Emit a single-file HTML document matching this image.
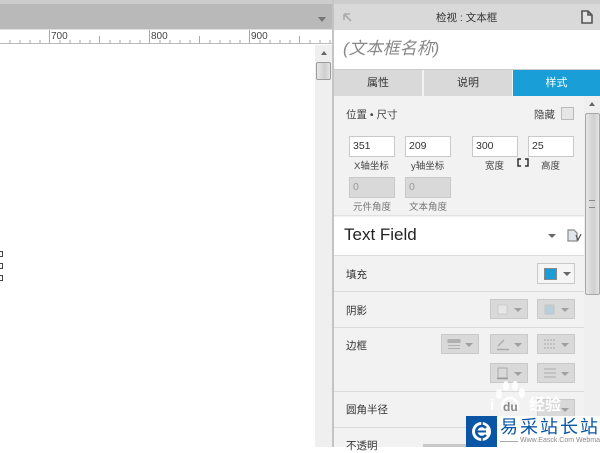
<!DOCTYPE html>
<html><head><meta charset="utf-8">
<style>
html,body{margin:0;padding:0}
body{width:600px;height:447px;overflow:hidden;position:relative;background:#fff;font-family:"Liberation Sans","Noto Sans CJK SC",sans-serif;color:#333}
.a{position:absolute;display:block}
.t{position:absolute;white-space:nowrap;line-height:14px;font-size:10.5px;color:#444}
.in{position:absolute;width:44px;height:19px;border:1px solid #c9c9c9;background:#fff;font-size:10.5px;line-height:19px;text-indent:3px;color:#333}
.in.d{background:#d9d9d9;color:#999}
.dd{position:absolute;width:36px;height:18px;border:1px solid #c9c9c9;background:#d9d9d9}
.dd:after{content:"";position:absolute;right:5px;top:8px;border:4px solid transparent;border-top:4px solid #a0a0a0;border-bottom:0}
.dd svg{position:absolute;left:4px;top:2px}
.line{position:absolute;left:334px;width:250px;height:1px;background:#dcdcdc}
.r{position:absolute;font-size:10px;color:#444;top:31px;line-height:11px}
</style></head><body>
<div class="a" style="left:0;top:0;width:600px;height:4px;background:#cdcdcd"></div>
<div class="a" style="left:0;top:4px;width:332px;height:25px;background:#b9b9b9"></div>
<div class="a" style="left:318px;top:17px;border:4px solid transparent;border-top:5px solid #777;border-bottom:0"></div>
<div class="a" style="left:0;top:29px;width:332px;height:1px;background:#dedede"></div>
<svg class="a" style="left:0;top:30px" width="332" height="15">
<path d="M0 13.5H332" stroke="#bbb" fill="none"/>
<path d="M10 10v3M20 10v3M30 10v3M40 10v3M60 10v3M70 10v3M80 10v3M90 10v3M110 10v3M120 10v3M130 10v3M140 10v3M160 10v3M170 10v3M180 10v3M190 10v3M210 10v3M220 10v3M230 10v3M240 10v3M260 10v3M270 10v3M280 10v3M290 10v3M310 10v3M320 10v3M330 10v3" stroke="#aaa" fill="none"/>
<path d="M49.5 0v13M149.5 0v13M249.5 0v13M99.5 6v7M199.5 6v7M299.5 6v7" stroke="#aaa" fill="none"/>
</svg>
<div class="r" style="left:51px">700</div>
<div class="r" style="left:151px">800</div>
<div class="r" style="left:251px">900</div>

<div class="a" style="left:315px;top:45px;width:17px;height:402px;background:#efefef"></div>
<div class="a" style="left:321px;top:51px;border:3px solid transparent;border-bottom:4px solid #666;border-top:0"></div>
<div class="a" style="left:316px;top:62px;width:13px;height:16px;border:1px solid #9c9c9c;border-radius:2px;background:linear-gradient(90deg,#e6e6e6,#cfcfcf 60%,#e4e4e4)"></div>

<div class="a" style="left:332px;top:0;width:2px;height:447px;background:#c4c4c4"></div>

<!-- panel -->
<div class="a" style="left:334px;top:4px;width:266px;height:26px;background:#d9d9d9"></div>
<svg class="a" style="left:343px;top:13px" width="10" height="10"><path d="M1 1h6M1 1v6M1 1l7 7" stroke="#aaa" stroke-width="1.6" fill="none"/></svg>
<div class="t" style="left:436px;top:11px;color:#333">检视 : 文本框</div>
<svg class="a" style="left:581px;top:10px" width="12" height="14"><path d="M1 1h6l4 4v8H1zM7 1v4h4" stroke="#555" stroke-width="1.6" fill="#e4e4e4"/></svg>
<div class="a" style="left:334px;top:30px;width:266px;height:39px;background:#fff"></div>
<div class="t" style="left:343px;top:37px;font-size:17px;line-height:23px;font-style:italic;color:#888">(文本框名称)</div>
<div class="a" style="left:334px;top:69px;width:266px;height:1px;background:#ccc"></div>
<div class="a" style="left:334px;top:70px;width:266px;height:26px;background:#f2f2f2"></div>
<div class="a" style="left:334px;top:70px;width:88px;height:26px;background:#d9d9d9;text-align:center;font-size:11px;line-height:26px;color:#333">属性</div>
<div class="a" style="left:424px;top:70px;width:88px;height:26px;background:#d9d9d9;text-align:center;font-size:11px;line-height:26px;color:#333">说明</div>
<div class="a" style="left:513px;top:70px;width:87px;height:26px;background:#199ed8;text-align:center;font-size:11px;line-height:26px;color:#fff">样式</div>
<div class="a" style="left:334px;top:96px;width:250px;height:351px;background:#f2f2f2"></div>

<!-- panel scrollbar -->
<div class="a" style="left:584px;top:96px;width:16px;height:351px;background:#efefef"></div>
<div class="a" style="left:589px;top:102px;border:3px solid transparent;border-bottom:4px solid #666;border-top:0"></div>
<div class="a" style="left:585px;top:113px;width:13px;height:180px;border:1px solid #a8a8a8;border-radius:2px;background:linear-gradient(90deg,#e6e6e6,#d0d0d0 60%,#e4e4e4)"></div>
<div class="a" style="left:589px;top:200px;width:6px;height:6px;border-top:1px solid #888;border-bottom:1px solid #888"></div>

<div class="t" style="left:346px;top:108px;font-size:10.5px">位置 • 尺寸</div>
<div class="t" style="left:534px;top:108px">隐藏</div>
<div class="a" style="left:561px;top:107px;width:11px;height:11px;border:1px solid #bbb;background:#e6e6e6"></div>

<div class="in" style="left:349px;top:136px">351</div>
<div class="in" style="left:405px;top:136px">209</div>
<div class="in" style="left:472px;top:136px">300</div>
<div class="in" style="left:528px;top:136px">25</div>
<div class="t" style="left:354px;top:160px;font-size:9.5px">X轴坐标</div>
<div class="t" style="left:411px;top:160px;font-size:9.5px">y轴坐标</div>
<div class="t" style="left:485px;top:160px;font-size:9.5px">宽度</div>
<div class="t" style="left:541px;top:160px;font-size:9.5px">高度</div>
<svg class="a" style="left:517px;top:158px" width="12" height="10"><path d="M4 1H1v7h3M8 1h3v7H8" stroke="#333" stroke-width="1.5" fill="none"/></svg>
<div class="in d" style="left:349px;top:177px">0</div>
<div class="in d" style="left:405px;top:177px">0</div>
<div class="t" style="left:353px;top:201px;font-size:9.5px;color:#777">元件角度</div>
<div class="t" style="left:409px;top:201px;font-size:9.5px;color:#777">文本角度</div>

<div class="a" style="left:334px;top:217px;width:250px;height:38px;background:#fff"></div>
<div class="a" style="left:334px;top:215px;width:250px;height:1px;background:#e2e2e2"></div>
<div class="line" style="top:255px"></div>
<div class="t" style="left:344px;top:224px;font-size:17px;line-height:22px;color:#222">Text Field</div>
<div class="a" style="left:548px;top:234px;border:4px solid transparent;border-top:4px solid #666;border-bottom:0"></div>
<svg class="a" style="left:567px;top:229px" width="15" height="13"><path d="M1 1h6l3 3v8H1z" stroke="#8a8a8a" stroke-width="1.2" fill="#dfe7ea"/><path d="M9 6l2 5 3-6" stroke="#555" stroke-width="1.2" fill="none"/></svg>

<div class="t" style="left:346px;top:268px;color:#333">填充</div>
<div class="a" style="left:537px;top:263px;width:36px;height:19px;border:1px solid #c9c9c9;background:#f5f5f5"></div>
<div class="a" style="left:544px;top:268px;width:11px;height:10px;background:#199ed8;border:1px solid #888"></div>
<div class="a" style="left:563px;top:272px;border:4px solid transparent;border-top:4px solid #666;border-bottom:0"></div>
<div class="line" style="top:291px"></div>

<div class="t" style="left:346px;top:304px;color:#333">阴影</div>
<div class="dd" style="left:490px;top:299px"><svg width="14" height="14"><rect x="3" y="3" width="9" height="9" fill="#e6e6e6" stroke="#ccc"/></svg></div>
<div class="dd" style="left:537px;top:299px"><svg width="14" height="14"><rect x="3" y="3" width="9" height="9" fill="#b9cfdc" stroke="#c4c4c4"/></svg></div>
<div class="line" style="top:327px"></div>

<div class="t" style="left:346px;top:339px;color:#333">边框</div>
<div class="dd" style="left:441px;top:334px"><svg width="16" height="14"><path d="M2 2.5h12v3H2zM2 8.5h12M2 11.5h12" stroke="#b0b0b0" fill="#b0b0b0"/></svg></div>
<div class="dd" style="left:490px;top:334px"><svg width="16" height="14"><path d="M3 9l6-6M2 12.5h12" stroke="#aaa" stroke-width="1.4" fill="none"/></svg></div>
<div class="dd" style="left:537px;top:334px"><svg width="16" height="14"><path d="M2 3h12M2 7h12M2 11h12" stroke="#aaa" stroke-dasharray="2 1" fill="none"/></svg></div>
<div class="dd" style="left:490px;top:363px"><svg width="16" height="14"><path d="M3 2h9v10H3z" stroke="#aaa" fill="none"/><path d="M2 12.5h11" stroke="#999" stroke-width="1.5"/></svg></div>
<div class="dd" style="left:537px;top:363px"><svg width="16" height="14"><path d="M2 3h12M2 7h12M2 11h12" stroke="#aaa" fill="none"/></svg></div>
<div class="line" style="top:391px"></div>

<div class="t" style="left:346px;top:403px;color:#333">圆角半径</div>
<div class="dd" style="left:537px;top:399px"></div>
<div class="line" style="top:427px"></div>
<div class="t" style="left:346px;top:439px;color:#333">不透明</div>
<div class="a" style="left:423px;top:444px;width:43px;height:3px;background:#c9c9c9"></div>

<!-- baidu watermark -->
<svg class="a" style="left:488px;top:380px" width="50" height="30"><g fill="#fff" opacity=".9"><ellipse cx="11" cy="14" rx="3" ry="5"/><ellipse cx="18" cy="6" rx="3" ry="5"/><ellipse cx="27" cy="6" rx="3" ry="5"/><ellipse cx="34" cy="13" rx="3" ry="5"/></g><path d="M14 28c0-7 4-10 8-10s8 3 8 10z" fill="none" stroke="#fff" stroke-width="2.5"/></svg>
<div class="t" style="left:503px;top:399px;font-size:12px;line-height:16px;font-weight:bold;color:#888">du</div>
<div class="t" style="left:529px;top:397px;font-size:16px;line-height:18px;font-weight:bold;color:#fff">经验</div>
<div class="t" style="left:490px;top:398px;font-size:15px;line-height:16px;font-weight:bold;color:#fff">i</div>

<!-- selection handles -->
<div class="a" style="left:-3px;top:251px;width:4px;height:4px;border:1.5px solid #444;background:#fff"></div>
<div class="a" style="left:-3px;top:263px;width:4px;height:4px;border:1.5px solid #444;background:#fff"></div>
<div class="a" style="left:-3px;top:275px;width:4px;height:4px;border:1.5px solid #444;background:#fff"></div>

<!-- logo -->
<div class="a" style="left:466px;top:416px;width:134px;height:31px;background:#fff"></div>
<div class="a" style="left:466px;top:416px;width:31px;height:31px;background:#0a56a5"></div>
<svg class="a" style="left:471px;top:421px" width="21" height="21"><circle cx="10.5" cy="10.5" r="9.5" fill="#fff"/><path d="M15 14a5.500 5.500 0 1 1 0-7" stroke="#0a56a5" stroke-width="2.500" fill="none"/><path d="M6 10.500h9" stroke="#0a56a5" stroke-width="2"/><path d="M11 0v5M11 16v5" stroke="#0a56a5" stroke-width="1.500"/></svg>
<div class="t" style="left:500px;top:416px;font-size:18px;line-height:22px;color:#0a56a5;letter-spacing:2px">易采站长站</div>
<div class="t" style="left:520px;top:437px;font-size:7px;line-height:8px;color:#888">Www.Easck.Com Webmaster</div>
<div class="a" style="left:500px;top:441px;width:18px;height:1px;background:#aaa"></div>
</body></html>
